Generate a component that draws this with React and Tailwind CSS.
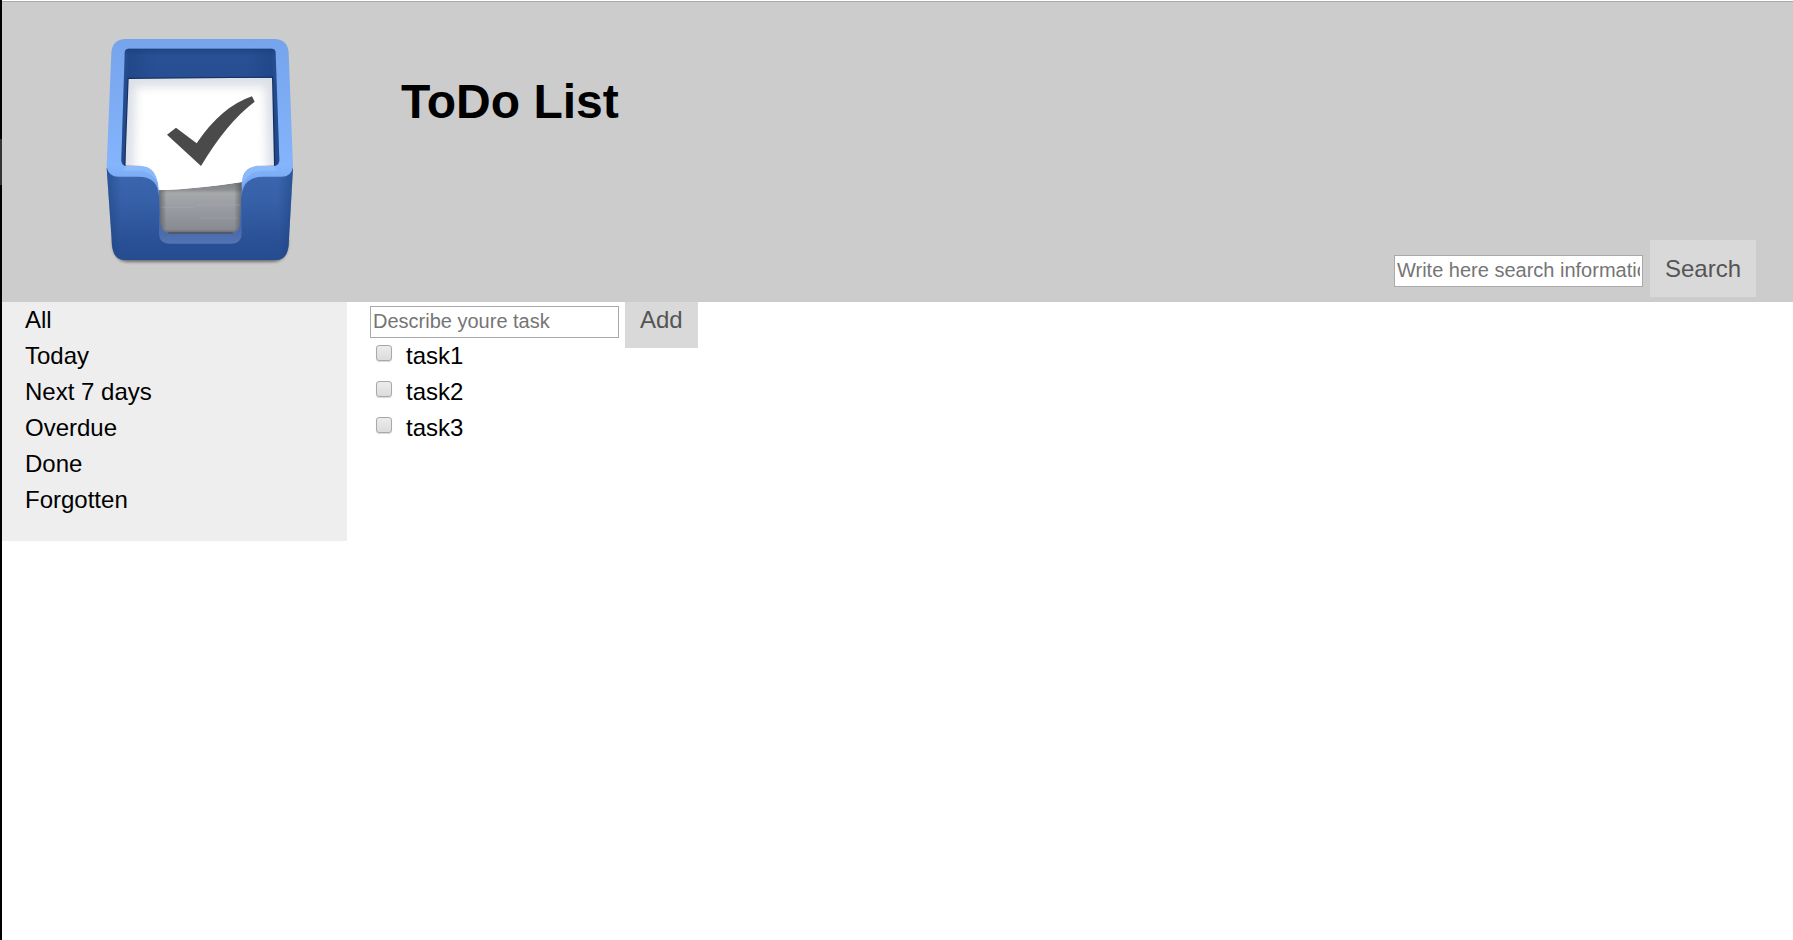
const filters = ["All", "Today", "Next 7 days", "Overdue", "Done", "Forgotten"];
const tasks = ["task1", "task2", "task3"];

function Logo() {
  return (
    <svg viewBox="0 0 660 780" className="h-[260px] w-[220px] shrink-0" role="img" aria-label="ToDo List logo">
      <defs>
        <linearGradient id="rim" x1="0" y1="0" x2="0" y2="1">
          <stop offset="0" stopColor="#76a4ec" />
          <stop offset="0.8" stopColor="#83b4fc" />
          <stop offset="1" stopColor="#6d9fe8" />
        </linearGradient>
        <linearGradient id="front" x1="0" y1="0" x2="0" y2="1">
          <stop offset="0" stopColor="#3c68b0" />
          <stop offset="0.35" stopColor="#3660a8" />
          <stop offset="0.85" stopColor="#284f94" />
          <stop offset="1" stopColor="#274d90" />
        </linearGradient>
        <linearGradient id="side" x1="0" y1="0" x2="1" y2="0">
          <stop offset="0" stopColor="#1c3f7d" stopOpacity="0.5" />
          <stop offset="0.08" stopColor="#1c3f7d" stopOpacity="0" />
          <stop offset="0.92" stopColor="#1c3f7d" stopOpacity="0" />
          <stop offset="1" stopColor="#1c3f7d" stopOpacity="0.5" />
        </linearGradient>
        <linearGradient id="inner" x1="0" y1="0" x2="1" y2="0">
          <stop offset="0" stopColor="#2b5397" />
          <stop offset="0.05" stopColor="#21498b" />
          <stop offset="0.22" stopColor="#285094" />
          <stop offset="0.78" stopColor="#285094" />
          <stop offset="0.95" stopColor="#21498b" />
          <stop offset="1" stopColor="#2b5397" />
        </linearGradient>
        <linearGradient id="innerTop" x1="0" y1="0" x2="0" y2="1">
          <stop offset="0" stopColor="#1b3f7c" stopOpacity="0.7" />
          <stop offset="0.06" stopColor="#1b3f7c" stopOpacity="0" />
          <stop offset="1" stopColor="#1b3f7c" stopOpacity="0.5" />
        </linearGradient>
        <linearGradient id="stack" x1="0" y1="0" x2="0" y2="1">
          <stop offset="0" stopColor="#7d7f82" />
          <stop offset="0.16" stopColor="#8d8f92" />
          <stop offset="0.22" stopColor="#a6a8ab" />
          <stop offset="0.55" stopColor="#979aa0" />
          <stop offset="0.92" stopColor="#888b91" />
          <stop offset="1" stopColor="#63666b" />
        </linearGradient>
        <linearGradient id="stackSide" x1="0" y1="0" x2="1" y2="0">
          <stop offset="0" stopColor="#44474c" stopOpacity="0.6" />
          <stop offset="0.09" stopColor="#44474c" stopOpacity="0" />
          <stop offset="0.91" stopColor="#44474c" stopOpacity="0" />
          <stop offset="1" stopColor="#44474c" stopOpacity="0.6" />
        </linearGradient>
        <linearGradient id="ledge" x1="0" y1="0" x2="0" y2="1">
          <stop offset="0" stopColor="#3d5c98" />
          <stop offset="0.8" stopColor="#4a6bac" />
          <stop offset="1" stopColor="#5474b4" />
        </linearGradient>
        <filter id="soft" x="-20%" y="-20%" width="140%" height="140%">
          <feGaussianBlur stdDeviation="14" />
        </filter>
        <filter id="shadow" x="-20%" y="-20%" width="140%" height="140%">
          <feGaussianBlur stdDeviation="4" />
        </filter>
        <clipPath id="sheet">
          <path d="M116 177L546 173L552 437H500Q456 445 456 486Q330 506 207 511Q203 437 150 437H106Z" />
        </clipPath>
      </defs>
      <path d="M66 660Q70 726 112 726H550Q592 726 596 660Z" fill="#555" opacity="0.8" filter="url(#shadow)" />
      {/* front of the tray */}
      <path d="M50 445L66 675Q70 720 104 720H558Q592 720 596 675L609 445Z" fill="url(#front)" />
      <path d="M50 445L66 675Q70 720 104 720H558Q592 720 596 675L609 445Z" fill="url(#side)" />
      {/* rim */}
      <path d="M64 98Q67 58 107 57H553Q593 58 596 98L609 440Q605 470 574 470H520Q458 470 455 530H207Q204 470 146 470H86Q55 470 50 440Z" fill="url(#rim)" />
      <path d="M108 437H150Q202 437 207 500Q188 452 146 452H100Z" fill="#97c3fc" opacity="0.5" />
      <path d="M552 437H506Q458 437 455 500Q475 452 520 452H562Z" fill="#97c3fc" opacity="0.5" />
      <path d="M104 98Q105 86 116 86H545Q556 86 557 98L568 420Q568 437 552 437H108Q94 437 94 420Z" fill="url(#inner)" />
      <path d="M104 98Q105 86 116 86H545Q556 86 557 98L568 420Q568 437 552 437H108Q94 437 94 420Z" fill="url(#innerTop)" />
      <path d="M113 173L549 170L556 437H103Z" fill="#142f60" />
      {/* stack of sheets in the cut-out */}
      <path d="M207 500H455V640Q455 671 424 671H238Q207 671 207 640Z" fill="url(#ledge)" />
      <path d="M207 485H455L450 607Q449 640 420 640H242Q213 640 211 607Z" fill="url(#stack)" />
      <path d="M207 485H455L450 607Q449 640 420 640H242Q213 640 211 607Z" fill="url(#stackSide)" />
      <path d="M214 562H310M320 555H450M330 594H445" stroke="#b4b7bc" strokeWidth="1.5" opacity="0.6" />
      <path d="M235 639H428" stroke="#3a3f48" strokeWidth="3" opacity="0.8" />
      {/* top sheet */}
      <g clipPath="url(#sheet)">
        <path d="M90 160H570V520H90Z" fill="#dce0e7" />
        <path d="M148 212H514L524 545H140Z" fill="#fff" stroke="#fff" strokeWidth="22" filter="url(#soft)" />
        <path d="M205 511Q330 504 456 486V445H190Z" fill="#fff" />
      </g>
      <path d="M231 344L258 323L320 370Q394 260 486 229L494 245Q410 308 333 438Z" fill="#4a4a4a" />
    </svg>
  );
}

const field =
  "h-8 w-[249px] border border-[#a9a9a9] bg-white px-0.5 pb-0.5 text-xl leading-7 text-black placeholder:text-[#757575] outline-none";

export default function App() {
  return (
    <div className="relative min-h-screen border-l-2 border-black bg-white font-['Liberation_Sans',Arial,sans-serif] text-2xl leading-9 text-black">
      <div className="absolute top-[139px] -left-0.5 h-[46px] w-0.5 bg-[#333]" />
      <header className="flex border-t border-white bg-[#ccc]">
        <div className="flex flex-1 border-t border-[#aaa] pr-[37px] pb-[5px] pl-[88px]">
          <div className="pt-[18px] pb-[17px]">
            <Logo />
          </div>
          <h1 className="ml-[91px] pt-[72px] text-5xl leading-[56px] font-bold">ToDo List</h1>
          <form className="ml-auto flex items-end gap-[7px]" onSubmit={(e) => e.preventDefault()}>
            <input
              type="text"
              aria-label="Search tasks"
              placeholder="Write here search information"
              className={`${field} mb-2.5`}
            />
            <button type="submit" className="h-[57px] bg-[#d9d9d9] px-[15px] text-[#555]">
              Search
            </button>
          </form>
        </div>
      </header>
      <div className="flex items-start">
        <nav className="w-[345px] shrink-0 bg-[#eee] pb-[23px] pl-[23px]">
          <ul>
            {filters.map((name) => (
              <li key={name}>
                <a href="#" className="block">
                  {name}
                </a>
              </li>
            ))}
          </ul>
        </nav>
        <main className="flex-1 pl-[23px]">
          <form className="flex h-9 items-start gap-1.5" onSubmit={(e) => e.preventDefault()}>
            <input
              type="text"
              aria-label="New task"
              placeholder="Describe youre task"
              className={`${field} mt-1`}
            />
            <button type="submit" className="bg-[#d9d9d9] px-[15px] pb-2.5 text-[#555]">
              Add
            </button>
          </form>
          <ul>
            {tasks.map((task) => (
              <li key={task}>
                <label className="flex items-start gap-3.5 pl-1.5">
                  <input
                    type="checkbox"
                    className="mt-[7px] size-4 shrink-0 appearance-none rounded-[3px] border border-[#a8a8a8] bg-linear-to-b from-[#ececec] to-[#dcdcdc] shadow-[0_1px_1px_rgba(0,0,0,0.15)] checked:bg-[#888]"
                  />
                  {task}
                </label>
              </li>
            ))}
          </ul>
        </main>
      </div>
    </div>
  );
}
